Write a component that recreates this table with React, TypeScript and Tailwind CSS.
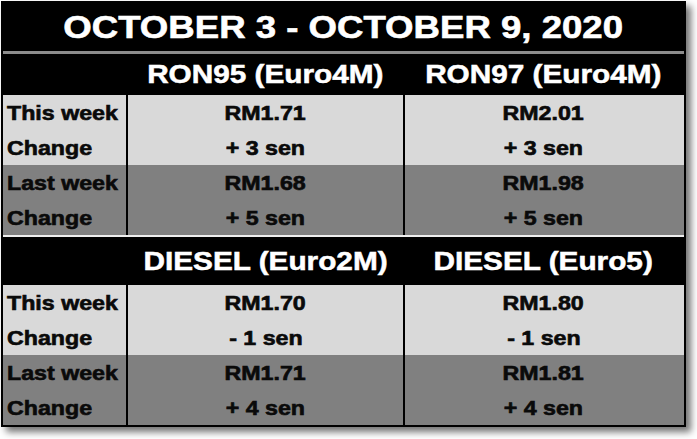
const font = { fontFamily: '"Liberation Sans", Arial, sans-serif' };

type Row = { label: string; a: string; b: string; dark?: boolean };

const Section = ({
  heads,
  rows,
  headH,
}: {
  heads: [string, string];
  rows: Row[];
  headH: string;
}) => (
  <div>
    <div className={`grid grid-cols-[125px_277px_277px] bg-black text-white ${headH}`}>
      <div className="border-r-2 border-black" />
      <div className="flex items-center justify-center border-r-2 border-black">
        <span className="inline-block scale-x-[1.19] text-[25px] font-bold leading-none [-webkit-text-stroke:0.5px_currentColor]">
          {heads[0]}
        </span>
      </div>
      <div className="flex items-center justify-center">
        <span className="inline-block scale-x-[1.19] text-[25px] font-bold leading-none [-webkit-text-stroke:0.5px_currentColor]">
          {heads[1]}
        </span>
      </div>
    </div>
    {rows.map((r, i) => (
      <div
        key={i}
        className={`grid h-[35px] grid-cols-[125px_277px_277px] text-[19.5px] font-bold text-[#0a0a0a] [-webkit-text-stroke:0.6px_currentColor] ${
          r.dark ? "bg-[#808080]" : "bg-[#d9d9d9]"
        }`}
      >
        <div className="flex items-center border-r-2 border-black pl-[4px] pt-[2px]">
          <span className="inline-block origin-left scale-x-[1.19] leading-none">{r.label}</span>
        </div>
        <div className="flex items-center justify-center border-r-2 border-black pt-[2px]">
          <span className="inline-block scale-x-[1.19] leading-none">{r.a}</span>
        </div>
        <div className="flex items-center justify-center pt-[2px]">
          <span className="inline-block scale-x-[1.19] leading-none">{r.b}</span>
        </div>
      </div>
    ))}
  </div>
);

export default function App() {
  return (
    <div className="h-[439px] w-[697px] overflow-hidden bg-white" style={font}>
      <div className="ml-[1px] mt-[1px] w-[685px] border-2 border-black bg-black shadow-[5px_5px_7px_rgba(0,0,0,0.55)]">
        <div className="flex h-[48px] items-center justify-center text-white">
          <span className="inline-block scale-x-[1.18] text-[31px] font-bold leading-none [-webkit-text-stroke:0.6px_currentColor]">
            OCTOBER 3 - OCTOBER 9, 2020
          </span>
        </div>
        <div className="h-[3px] bg-[#8c8c8c]" />
        <Section
          headH="h-[41px]"
          heads={["RON95 (Euro4M)", "RON97 (Euro4M)"]}
          rows={[
            { label: "This week", a: "RM1.71", b: "RM2.01" },
            { label: "Change", a: "+ 3 sen", b: "+ 3 sen" },
            { label: "Last week", a: "RM1.68", b: "RM1.98", dark: true },
            { label: "Change", a: "+ 5 sen", b: "+ 5 sen", dark: true },
          ]}
        />
        <div className="h-[2px] bg-[#eeeeee]" />
        <Section
          headH="h-[48px]"
          heads={["DIESEL (Euro2M)", "DIESEL (Euro5)"]}
          rows={[
            { label: "This week", a: "RM1.70", b: "RM1.80" },
            { label: "Change", a: "- 1 sen", b: "- 1 sen" },
            { label: "Last week", a: "RM1.71", b: "RM1.81", dark: true },
            { label: "Change", a: "+ 4 sen", b: "+ 4 sen", dark: true },
          ]}
        />
      </div>
    </div>
  );
}
